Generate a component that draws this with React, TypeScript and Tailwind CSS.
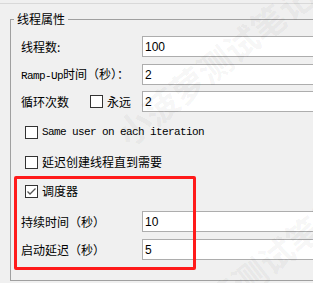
import React from "react";

const cjk = "font-['Noto_Sans_CJK_SC','Noto_Sans',sans-serif]";
const mono = "font-['Liberation_Mono',monospace] text-[11px] tracking-[-0.6px]";

function CheckBox({ checked = false }: { checked?: boolean }) {
  return (
    <span className="flex h-[13px] w-[13px] shrink-0 items-center justify-center border border-[#333333] bg-white">
      {checked && (
        <svg width="11" height="11" viewBox="0 0 11 11">
          <polyline
            points="1.5,5.5 4,8 9.5,2.5"
            fill="none"
            stroke="#555"
            strokeWidth="1.3"
          />
        </svg>
      )}
    </span>
  );
}

function Field({ value }: { value: string }) {
  return (
    <div className="flex h-[21px] flex-1 items-center border border-[#adadad] bg-white pl-[2px] font-['Liberation_Sans',sans-serif] text-[12px] text-black">
      {value}
    </div>
  );
}

function Row({ label, value, mt }: { label: React.ReactNode; value: string; mt: string }) {
  return (
    <div className={`flex h-[21px] items-center ${mt}`}>
      <div className="flex w-[121px] items-center">{label}</div>
      <Field value={value} />
    </div>
  );
}

export default function App() {
  return (
    <div className={`relative h-[283px] w-[313px] overflow-hidden bg-[#f0f0f0] text-[12px] text-black ${cjk}`}>
      <div className="mt-[3px] h-px bg-[#d9d9d9]" />
      <fieldset className="ml-[10px] mt-[6px] w-[340px] border border-[#a0a0a0] pb-[20px]">
        <legend className="ml-[3px] px-[3px] text-[12px] leading-[18px]">线程属性</legend>
        <div className="flex flex-col pl-[10px]">
          <Row mt="mt-[8px]" label="线程数:" value="100" />
          <Row
            mt="mt-[7px]"
            label={
              <span>
                <span className={mono}>Ramp-Up</span>时间（秒）：
              </span>
            }
            value="2"
          />
          <Row
            mt="mt-[6px]"
            label={
              <>
                <span className="w-[69px]">循环次数</span>
                <CheckBox />
                <span className="ml-[4px]">永远</span>
              </>
            }
            value="2"
          />
          <div className="mt-[10px] flex h-[20px] items-center gap-[4px] pl-[4px]">
            <CheckBox />
            <span className={mono}>Same user on each iteration</span>
          </div>
          <div className="mt-[10px] flex h-[20px] items-center gap-[4px] pl-[4px]">
            <CheckBox />
            <span>延迟创建线程直到需要</span>
          </div>
          <div className="mt-[9px] flex h-[20px] items-center gap-[4px] pl-[4px]">
            <CheckBox checked />
            <span>调度器</span>
          </div>
          <Row mt="mt-[10px]" label="持续时间（秒）" value="10" />
          <Row mt="mt-[7px]" label="启动延迟（秒）" value="5" />
        </div>
      </fieldset>

      <div className="pointer-events-none absolute left-[14px] top-[176px] h-[94px] w-[182px] rounded-[2px] border-[3px] border-[#ff1a1a]" />

      <div className="pointer-events-none absolute left-[95px] top-[38px] -rotate-[38deg] whitespace-nowrap text-[34px] font-bold text-black/[0.05]">
        小菠萝测试笔记
      </div>
      <div className="pointer-events-none absolute left-[130px] top-[250px] -rotate-[38deg] whitespace-nowrap text-[34px] font-bold text-black/[0.05]">
        小菠萝测试笔记
      </div>
    </div>
  );
}
